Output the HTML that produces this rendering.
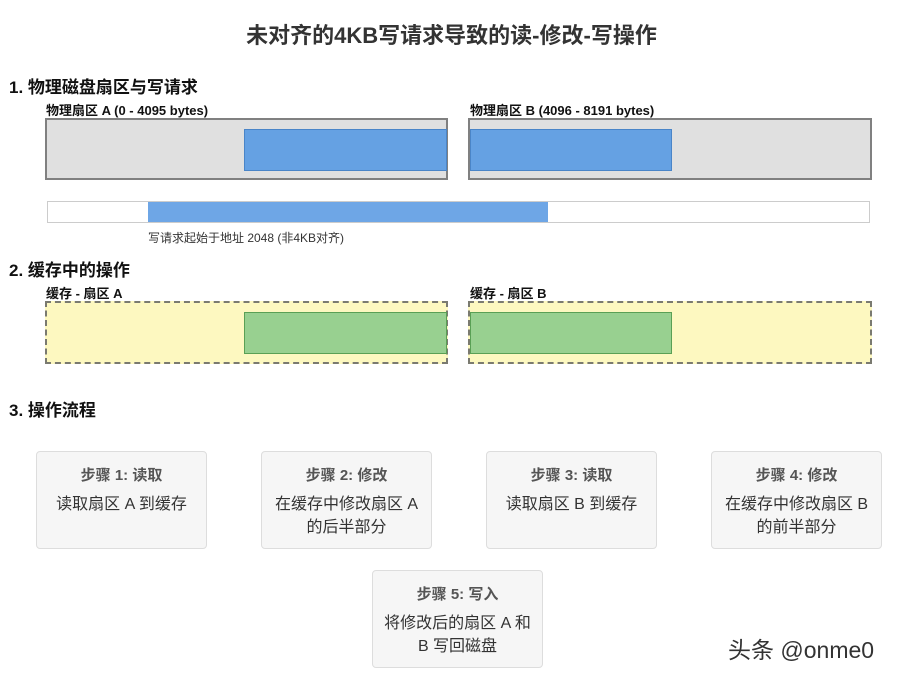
<!DOCTYPE html>
<html><head><meta charset="utf-8"><style>
*{margin:0;padding:0;box-sizing:border-box}
body{width:903px;height:678px;background:#fff;position:relative;overflow:hidden;font-family:"Liberation Sans","Noto Sans CJK SC",sans-serif;color:#222}
.a{position:absolute}
h1{position:absolute;left:0;width:903px;top:18px;text-align:center;font-size:22px;font-weight:bold;color:#333}
.h{position:absolute;left:9px;font-size:17px;font-weight:bold;color:#111}
.l{position:absolute;font-size:13px;font-weight:bold;color:#111}
.sec{position:absolute;background:#e0e0e0;border:2px solid #808080}
.blue{position:absolute;background:#65a1e3;border:1px solid #4a85c8}
.cache{position:absolute;background:#fdf8c0;border:2px dashed #7a7a70}
.green{position:absolute;background:#98d090;border:1px solid #5aa055}
.step{position:absolute;width:171px;height:98px;background:#f6f6f6;border:1px solid #ddd;border-radius:4px;text-align:center;font-size:16px;color:#333}
.step b{display:block;margin-top:12px;font-size:15px;color:#555;margin-bottom:8px}
.step div{line-height:23px}
</style></head><body>
<h1>未对齐的4KB写请求导致的读-修改-写操作</h1>
<div class="h" style="top:73px">1. 物理磁盘扇区与写请求</div>
<div class="l" style="left:46px;top:100px">物理扇区 A (0 - 4095 bytes)</div>
<div class="l" style="left:470px;top:100px">物理扇区 B (4096 - 8191 bytes)</div>
<div class="sec" style="left:45px;top:118px;width:403px;height:62px"></div>
<div class="blue" style="left:244px;top:129px;width:203px;height:42px"></div>
<div class="sec" style="left:468px;top:118px;width:404px;height:62px"></div>
<div class="blue" style="left:470px;top:129px;width:202px;height:42px"></div>
<div class="a" style="left:47px;top:201px;width:823px;height:22px;border:1px solid #ccc;background:#fff"></div>
<div class="a" style="left:148px;top:202px;width:400px;height:20px;background:#6ea6e6"></div>
<div class="a" style="left:148px;top:229px;font-size:12px;color:#333">写请求起始于地址 2048 (非4KB对齐)</div>
<div class="h" style="top:256px">2. 缓存中的操作</div>
<div class="l" style="left:46px;top:283px">缓存 - 扇区 A</div>
<div class="l" style="left:470px;top:283px">缓存 - 扇区 B</div>
<div class="cache" style="left:45px;top:301px;width:403px;height:63px"></div>
<div class="green" style="left:244px;top:312px;width:203px;height:42px"></div>
<div class="cache" style="left:468px;top:301px;width:404px;height:63px"></div>
<div class="green" style="left:470px;top:312px;width:202px;height:42px"></div>
<div class="h" style="top:396px">3. 操作流程</div>
<div class="step" style="left:36px;top:451px"><b>步骤 1: 读取</b><div>读取扇区 A 到缓存</div></div>
<div class="step" style="left:261px;top:451px"><b>步骤 2: 修改</b><div>在缓存中修改扇区 A<br>的后半部分</div></div>
<div class="step" style="left:486px;top:451px"><b>步骤 3: 读取</b><div>读取扇区 B 到缓存</div></div>
<div class="step" style="left:711px;top:451px"><b>步骤 4: 修改</b><div>在缓存中修改扇区 B<br>的前半部分</div></div>
<div class="step" style="left:372px;top:570px"><b>步骤 5: 写入</b><div>将修改后的扇区 A 和<br>B 写回磁盘</div></div>
<div class="a" style="left:728px;top:631px;font-size:23px;color:#333">头条 @onme0</div>
</body></html>
